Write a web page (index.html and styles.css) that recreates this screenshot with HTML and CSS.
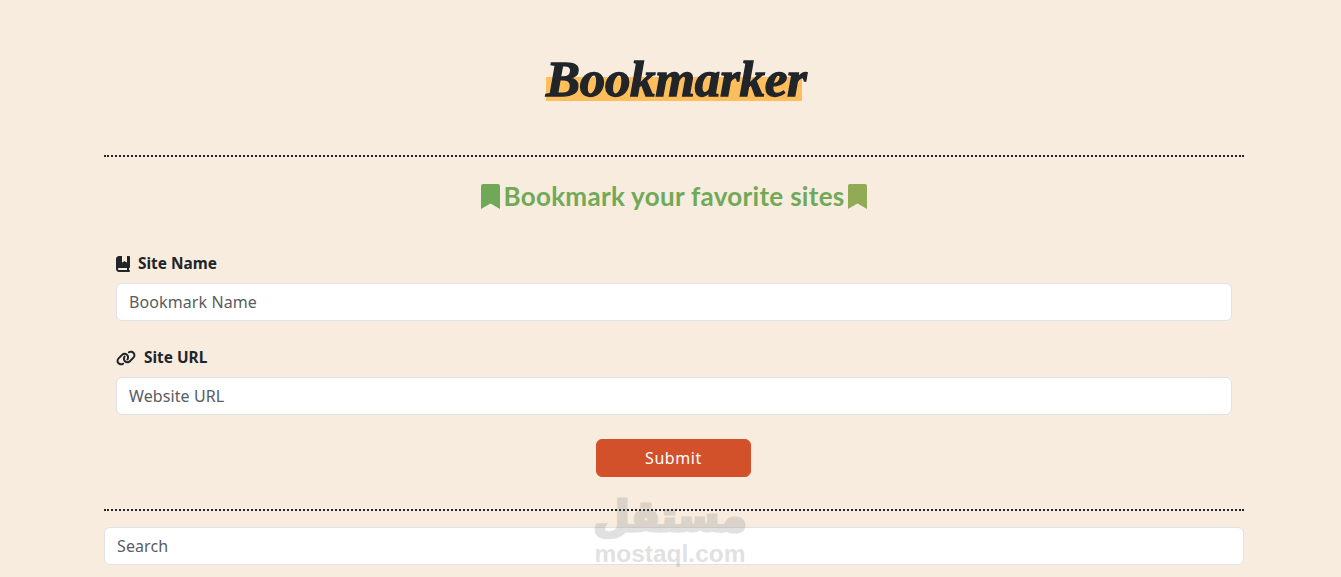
FILE: index.html
```html
<!DOCTYPE html>
<html>
<head>
	<title>Bookmarker</title>
	<link rel="stylesheet" href="styles.css">
</head>
<body>
	<div class="container">
		<header class="brand">
			<h1 class="logo"><span class="logo-text">Bookmarker</span></h1>
		</header>

		<section class="panel">
			<h2 class="subtitle">
				<svg class="ribbon" viewBox="0 0 19 25"><path fill="#6fa958" d="M0 2a2 2 0 0 1 2-2h15a2 2 0 0 1 2 2v23l-9.5-5.500L0 25z"/></svg>
				<span>Bookmark your favorite sites</span>
				<svg class="ribbon" viewBox="0 0 19 25"><path fill="#91ab55" d="M0 2a2 2 0 0 1 2-2h15a2 2 0 0 1 2 2v23l-9.500-5.500L0 25z"/></svg>
			</h2>

			<form class="form">
				<div class="field">
					<label class="field-label">
						<svg class="icon-book" viewBox="0 0 448 512"><path fill="#212529" d="M0 96C0 43 43 0 96 0h96V190.700c0 13.400 15.500 20.900 26 12.500L272 160l54 43.200c10.500 8.400 26 .9 26-12.500V0h32 32c17.700 0 32 14.300 32 32V352c0 17.700-14.300 32-32 32v64c17.700 0 32 14.300 32 32s-14.300 32-32 32H384 96c-53 0-96-43-96-96V96zM64 416c0 17.700 14.300 32 32 32H352V384H96c-17.700 0-32 14.300-32 32z"/></svg>
						Site Name
					</label>
					<input class="input" type="text" placeholder="Bookmark Name">
				</div>
				<div class="field">
					<label class="field-label">
						<svg class="icon-link" viewBox="0 0 640 512"><path fill="#212529" d="M579.800 267.700c56.500-56.500 56.500-148 0-204.500c-50-50-128.800-56.500-186.300-15.400l-1.600 1.100c-14.400 10.300-17.700 30.300-7.400 44.600s30.300 17.700 44.600 7.400l1.600-1.100c32.100-22.900 76-19.300 103.800 8.600c31.500 31.500 31.500 82.500 0 114L422.300 334.800c-31.500 31.500-82.500 31.500-114 0c-27.900-27.900-31.500-71.800-8.600-103.800l1.100-1.600c10.300-14.400 6.900-34.400-7.400-44.600s-34.400-6.900-44.600 7.400l-1.100 1.600C206.500 251.200 213 330 263 380c56.500 56.500 148 56.500 204.500 0L579.800 267.700zM60.200 244.300c-56.500 56.500-56.500 148 0 204.500c50 50 128.800 56.500 186.300 15.400l1.600-1.100c14.400-10.300 17.700-30.300 7.400-44.600s-30.300-17.700-44.600-7.400l-1.600 1.100c-32.100 22.900-76 19.300-103.800-8.600C74 372 74 321 105.500 289.500L217.700 177.200c31.500-31.500 82.500-31.500 114 0c27.900 27.900 31.500 71.800 8.600 103.900l-1.100 1.600c-10.300 14.400-6.900 34.400 7.400 44.600s34.400 6.900 44.600-7.400l1.100-1.600C433.500 260.800 427 182 377 132c-56.500-56.500-148-56.500-204.500 0L60.200 244.300z"/></svg>
						Site URL
					</label>
					<input class="input" type="text" placeholder="Website URL">
				</div>
				<div class="actions">
					<button class="submit" type="button">Submit</button>
				</div>
			</form>
		</section>

		<div class="search">
			<input class="input" type="text" placeholder="Search">
		</div>
	</div>

	<div class="watermark">
		<div class="watermark-ar" lang="ar" dir="rtl">مستقل</div>
		<div class="watermark-en">mostaql.com</div>
	</div>
</body>
</html>
```

FILE: styles.css
```css
* {
	margin: 0;
	padding: 0;
	box-sizing: border-box;
}
html, body {
	height: 577px;
	overflow: hidden;
}
body {
	background: #f8ecdf;
	color: #212529;
	font-family: "Noto Sans", sans-serif;
	position: relative;
}
.container {
	width: 1140px;
	margin-left: 104px;
}
.brand {
	height: 157px;
	padding-top: 48px;
	border-bottom: 2px dotted #212529;
	text-align: center;
}
.logo {
	font-family: "Liberation Serif", serif;
	font-style: italic;
	font-weight: 700;
	font-size: 51px;
	line-height: 58px;
}
.logo-text {
	display: inline-block;
	width: 256px;
	height: 53px;
	line-height: 62px;
	white-space: nowrap;
	-webkit-text-stroke: 1.300px #212529;
	background: linear-gradient(transparent 29px, #ffbe5c 29px);
	letter-spacing: -.3px;
}
.panel {
	height: 354px;
	border-bottom: 2px dotted #212529;
}
.subtitle {
	display: flex;
	justify-content: center;
	align-items: center;
	height: 78px;
	color: #71a957;
	font-family: "Lato", sans-serif;
	font-size: 26px;
	font-weight: 700;
	letter-spacing: .3px;
}
.ribbon {
	width: 19px;
	height: 25px;
	margin: 0 3px;
}
.form {
	padding: 0 12px;
}
.field {
	margin-bottom: 8px;
}
.field-label {
	display: flex;
	align-items: flex-end;
	height: 48px;
	padding-bottom: 9px;
	font-size: 15.400px;
	font-weight: 700;
	line-height: 20px;
}
.icon-book {
	width: 14px;
	height: 16px;
	margin-right: 8px;
	margin-bottom: 2px;
}
.icon-link {
	width: 20px;
	height: 16px;
	margin-right: 8px;
	margin-bottom: 2px;
}
.input {
	display: block;
	width: 100%;
	height: 38px;
	padding: 0 12px;
	background: #fff;
	border: 1px solid #dee2e6;
	border-radius: 6px;
	font-family: "Noto Sans", sans-serif;
	font-size: 16px;
	letter-spacing: .1px;
	color: #212529;
}
.input::placeholder {
	color: #595c5f;
	opacity: 1;
}
.actions {
	display: flex;
	justify-content: center;
	padding-top: 16px;
}
.submit {
	width: 155px;
	height: 38px;
	margin-right: 1px;
	background: #d2502a;
	border: 1px solid #d2502a;
	border-radius: 6px;
	color: #fff;
	font-family: "Noto Sans", sans-serif;
	font-size: 16px;
	letter-spacing: .6px;
}
.search {
	padding-top: 16px;
}
.watermark {
	position: absolute;
	left: 570px;
	top: 492px;
	width: 200px;
	text-align: center;
	color: #6e6e6e;
	opacity: .2;
	pointer-events: none;
}
.watermark-ar {
	font-family: "DejaVu Sans", sans-serif;
	font-weight: 700;
	font-size: 42px;
	line-height: 50px;
	-webkit-text-stroke: 3px #6e6e6e;
}
.watermark-en {
	font-family: "Liberation Sans", sans-serif;
	font-weight: 700;
	font-size: 24.500px;
	line-height: 24px;
}
```
